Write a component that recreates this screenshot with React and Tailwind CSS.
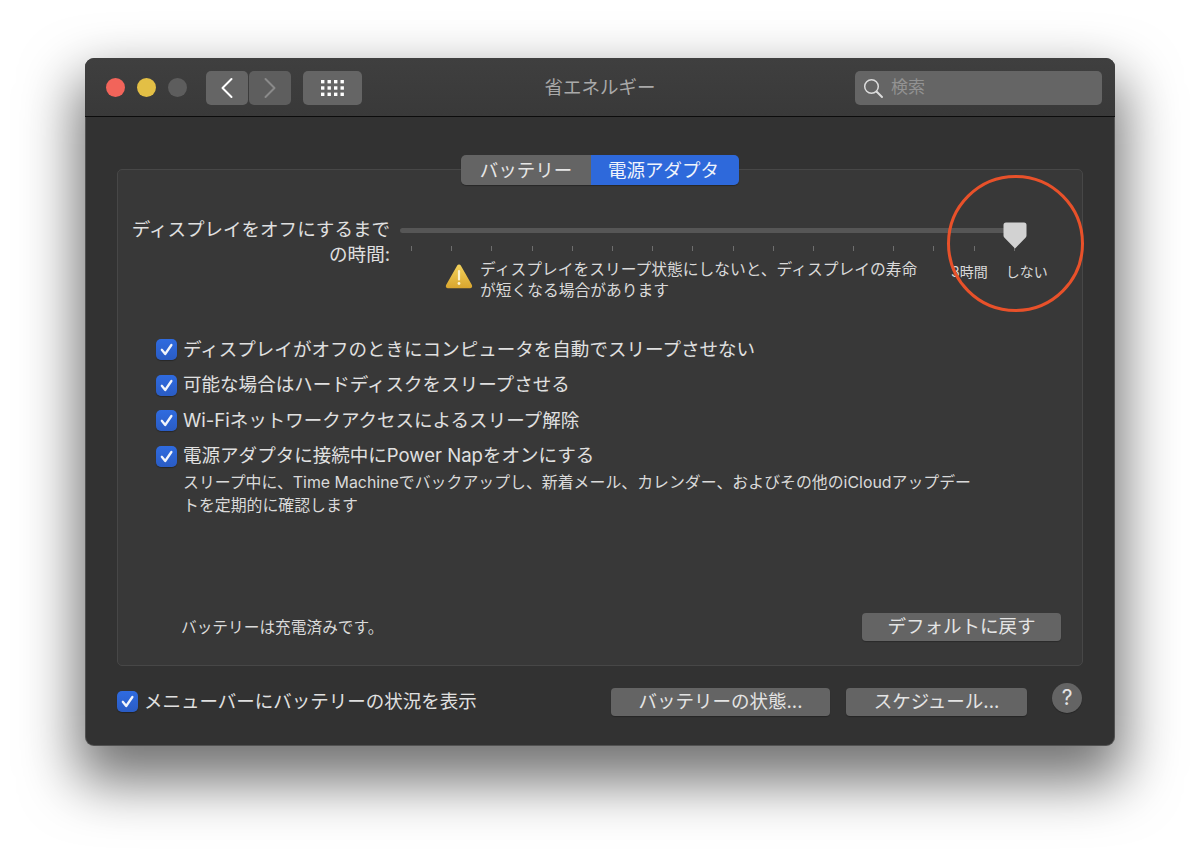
import React from "react";

const ticks = Array.from({ length: 16 });

const Check = ({ className = "" }) => (
  <span className={"flex h-[21px] w-[21px] shrink-0 items-center justify-center rounded-[5px] bg-gradient-to-b from-[#2f6be0] to-[#2a5cc4] shadow-[0_1px_1px_rgba(0,0,0,0.3)] " + className}>
    <svg viewBox="0 0 21 21" className="h-[21px] w-[21px]" fill="none" stroke="#f2f5fb" strokeWidth="2.3" strokeLinecap="round" strokeLinejoin="round">
      <path d="M5.8 10.8 9.2 15 15.4 6" />
    </svg>
  </span>
);

const Button = ({ children, className = "" }) => (
  <div className={"flex h-[28px] items-center justify-center rounded-[4px] bg-[#646464] text-[18.5px] text-[#e4e4e4] shadow-[0_1px_1px_rgba(0,0,0,0.25)] " + className}>
    {children}
  </div>
);

const CheckRow = ({ children }) => (
  <div className="flex h-[21px] items-center gap-[6px] text-[18.55px] text-[#e0e0e0]">
    <Check />
    <span>{children}</span>
  </div>
);

const gridDots = [0, 6.5, 13, 19.5].flatMap((x) => [0, 6.3, 12.6].map((y) => [x, y]));

export default function App() {
  return (
    <div className="h-[860px] w-[1200px] overflow-hidden bg-white pl-[85px] pt-[58px] font-['Inter','Noto_Sans_CJK_JP',sans-serif]">
      <div className="relative flex h-[688px] w-[1030px] flex-col rounded-[9px] bg-[#323232] shadow-[0_28px_55px_8px_rgba(0,0,0,0.55),inset_0_0_0_1px_rgba(255,255,255,0.16)]">
        {/* title bar */}
        <div className="grid h-[59px] shrink-0 grid-cols-[1fr_auto_1fr] items-center rounded-t-[9px] border-b border-[#0c0c0c] bg-gradient-to-b from-[#3f3f3f] to-[#393939] px-[21px] pt-[1px]">
          <div className="flex items-center">
            <span className="h-[19px] w-[19px] rounded-full bg-[#f2645a]" />
            <span className="ml-[12px] h-[19px] w-[19px] rounded-full bg-[#e3bf45]" />
            <span className="ml-[12px] h-[19px] w-[19px] rounded-full bg-[#5d5d5d]" />
            <div className="ml-[19px] flex h-[34px] w-[42px] items-center justify-center rounded-[5px] bg-[#656565]">
              <svg viewBox="0 0 14 22" className="h-[22px] w-[14px]" fill="none" stroke="#ffffff" strokeWidth="2" strokeLinecap="round" strokeLinejoin="round">
                <path d="M11.5 2 2.5 11l9 9" />
              </svg>
            </div>
            <div className="ml-[1px] flex h-[34px] w-[42px] items-center justify-center rounded-[5px] bg-[#5e5e5e]">
              <svg viewBox="0 0 14 22" className="h-[22px] w-[14px]" fill="none" stroke="#8a8a8a" strokeWidth="2" strokeLinecap="round" strokeLinejoin="round">
                <path d="M2.5 2 11.5 11l-9 9" />
              </svg>
            </div>
            <div className="ml-[12px] flex h-[34px] w-[59px] items-center justify-center rounded-[5px] bg-[#656565]">
              <svg viewBox="0 0 23 16" className="h-[16px] w-[23px]" fill="#ffffff">
                {gridDots.map(([x, y]) => (
                  <rect key={x + "-" + y} x={x} y={y} width="3.4" height="3.4" />
                ))}
              </svg>
            </div>
          </div>
          <div className="mt-[1px] text-[18.5px] text-[#a9a9a9]">省エネルギー</div>
          <div className="flex justify-end">
            <div className="-mr-[8px] flex h-[34px] w-[247px] items-center rounded-[5px] bg-[#656565] pl-[8px]">
              <svg viewBox="0 0 20 20" className="h-[20px] w-[20px]" fill="none" stroke="#dcdcdc" strokeWidth="1.5" strokeLinecap="round">
                <circle cx="8.5" cy="8.5" r="6.8" />
                <path d="M13.5 13.5 19 19" strokeWidth="1.9" />
              </svg>
              <span className="ml-[8px] mt-[1px] text-[17px] text-[#929292]">検索</span>
            </div>
          </div>
        </div>

        {/* content */}
        <div className="relative mx-[32px] mt-[52px] flex h-[497px] flex-col rounded-[5px] border border-[#474747] bg-[#383838] pl-[38px] pr-[21px]">
          {/* tabs */}
          <div className="absolute left-[343px] top-[-15px] flex h-[30px] w-[278px] overflow-hidden rounded-[5px] text-[18.5px] text-[#e6e6e6] shadow-[0_1px_1px_rgba(0,0,0,0.3)]">
            <div className="flex w-[130px] items-center justify-center bg-[#646464] pt-[1px]">バッテリー</div>
            <div className="flex w-[148px] items-center justify-center bg-[#2e69db] pr-[3px] pt-[1px] text-[#f0f4fc]">電源アダプタ</div>
          </div>

          {/* slider */}
          <div className="-ml-[38px] mt-[46px] flex">
            <div className="w-[272px] pt-[1px] text-right text-[18.55px] leading-[25px] text-[#e0e0e0]">
              ディスプレイをオフにするまで
              <br />
              の時間:
            </div>
            <div className="relative ml-[10px] w-[660px]">
              <div className="mt-[12px] h-[5px] w-[615px] rounded-full bg-[#565656]" />
              <div className="ml-[11px] mt-[13px] flex h-[5px] w-[604px] justify-between">
                {ticks.map((_, i) => (
                  <span key={i} className="h-[5px] w-[1px] bg-[#6e6e6e]" />
                ))}
              </div>
              <svg viewBox="0 0 24 27" className="absolute left-[603px] top-[6px] h-[27px] w-[24px]">
                <path d="M3 0.5h18a2.5 2.5 0 0 1 2.5 2.5v10.5a3 3 0 0 1-1 2.2L12 26.5 1.5 15.700a3 3 0 0 1-1-2.200V3A2.5 2.5 0 0 1 3 0.5z" fill="#d2d2d2" />
              </svg>
              <div className="mt-[8px] flex items-start">
                <svg viewBox="0 0 28 26" className="ml-[45px] mt-[4px] h-[26px] w-[28px] shrink-0">
                  <defs>
                    <linearGradient id="warn" x1="0" y1="0" x2="0" y2="1">
                      <stop offset="0" stopColor="#f3d35c" />
                      <stop offset="1" stopColor="#d9a52e" />
                    </linearGradient>
                  </defs>
                  <path d="M14 1.500c.8 0 1.400.4 1.800 1.100L26.900 22c.8 1.500-.1 3.200-1.900 3.200H3C1.200 25.200.3 23.500 1.100 22L12.200 2.600C12.600 1.900 13.200 1.500 14 1.500z" fill="url(#warn)" />
                  <path d="M14 8v8.500" stroke="#fbf3d0" strokeWidth="2.200" strokeLinecap="round" />
                  <circle cx="14" cy="20.500" r="1.400" fill="#fbf3d0" />
                </svg>
                <div className="ml-[7px] w-[445px] text-[15.75px] leading-[21px] text-[#dadada]">
                  ディスプレイをスリープ状態にしないと、ディスプレイの寿命
                  <br />
                  が短くなる場合があります
                </div>
                <span className="ml-[26px] mt-[2px] text-[14px] leading-[21px] text-[#dadada]">3時間</span>
                <span className="ml-[18px] mt-[2px] text-[14px] leading-[21px] text-[#dadada]">しない</span>
              </div>
            </div>
          </div>

          {/* options */}
          <div className="mt-[38px] flex flex-col gap-[14.5px]">
            <CheckRow>ディスプレイがオフのときにコンピュータを自動でスリープさせない</CheckRow>
            <CheckRow>可能な場合はハードディスクをスリープさせる</CheckRow>
            <CheckRow>Wi-Fiネットワークアクセスによるスリープ解除</CheckRow>
            <CheckRow>電源アダプタに接続中にPower Napをオンにする</CheckRow>
          </div>
          <div className="ml-[27px] mt-[4px] w-[810px] text-[15.9px] leading-[23px] text-[#dadada]">
            スリープ中に、Time Machineでバックアップし、新着メール、カレンダー、およびその他のiCloudアップデー
            <br />
            トを定期的に確認します
          </div>

          {/* status + default */}
          <div className="mb-[24px] mt-auto flex items-center justify-between pl-[25px]">
            <span className="mt-[1px] text-[15.7px] text-[#dadada]">バッテリーは充電済みです。</span>
            <Button className="w-[199px]">デフォルトに戻す</Button>
          </div>
        </div>

        {/* bottom row */}
        <div className="flex items-start pl-[32px] pr-[33px]">
          <div className="mt-[22px] flex items-center gap-[6px] text-[18.5px] text-[#e0e0e0]">
            <Check />
            <span>メニューバーにバッテリーの状況を表示</span>
          </div>
          <Button className="ml-auto mt-[22px] w-[219px]">バッテリーの状態...</Button>
          <Button className="ml-[16px] mt-[22px] w-[181px]">スケジュール...</Button>
          <div className="ml-[25px] mt-[17px] flex h-[30px] w-[30px] items-center justify-center rounded-full bg-[#646464] text-[21px] text-[#e4e4e4] shadow-[0_1px_1px_rgba(0,0,0,0.25)]">?</div>
        </div>

        {/* red annotation circle */}
        <div className="absolute left-[862px] top-[117px] h-[137px] w-[137px] rounded-full border-[3.5px] border-[#e8512a]" />
      </div>
    </div>
  );
}
